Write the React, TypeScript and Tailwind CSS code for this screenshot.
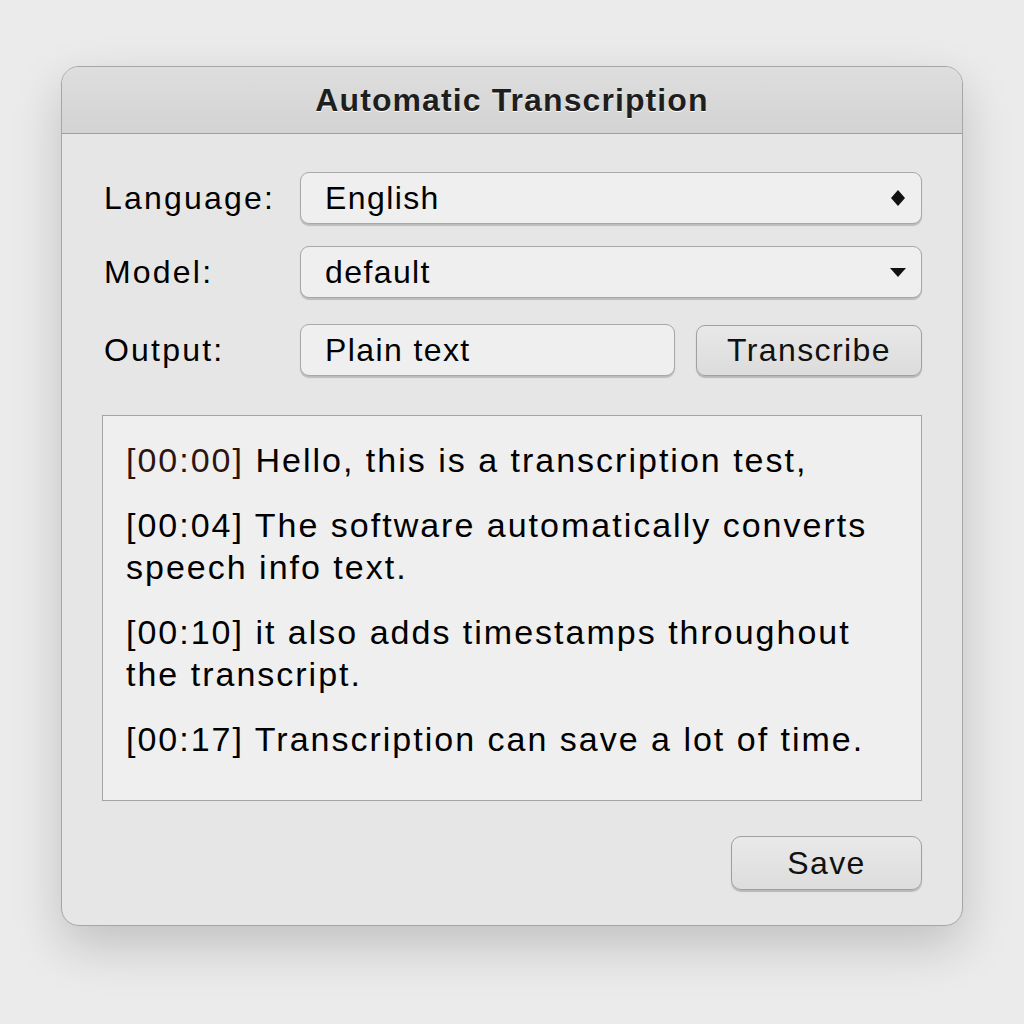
import React from "react";

const font = { fontFamily: '"Liberation Sans", Arial, sans-serif' };

export default function App() {
  return (
    <div
      className="w-[1024px] h-[1024px] bg-[#ebebeb] pt-[66px] pl-[61px]"
      style={font}
    >
      <div className="w-[902px] h-[860px] rounded-[18px] border-[1.5px] border-[#a6a6a6] bg-[#e6e6e6] shadow-[0_20px_50px_rgba(0,0,0,0.18)] flex flex-col overflow-hidden">
        <div className="h-[67px] shrink-0 bg-gradient-to-b from-[#dedede] to-[#d3d3d3] border-b-[1.5px] border-[#9e9e9e] flex items-center justify-center">
          <span className="text-[32px] font-bold tracking-[1.1px] text-[#1e1e1e] [text-shadow:0_1px_0_#ffffff]">
            Automatic Transcription
          </span>
        </div>
        <div className="flex-1 flex flex-col pl-[42px] pr-[40px] pt-[38px]">
          <div className="flex items-center h-[52px]">
            <div className="w-[196px] text-[32px] tracking-[2.2px] text-black">Language:</div>
            <div className="flex-1 h-[52px] rounded-[9px] border border-[#a8a8a8] bg-[#efefef] shadow-[0_1.5px_1px_rgba(0,0,0,0.18)] flex items-center pl-[24px] pr-[16px]">
              <span className="flex-1 text-[32px] tracking-[1.4px] text-black">English</span>
              <svg width="14" height="16" viewBox="0 0 14 16">
                <polygon points="7,0 14,8 7,16 0,8" fill="#111" />
              </svg>
            </div>
          </div>
          <div className="flex items-center h-[52px] mt-[22px]">
            <div className="w-[196px] text-[32px] tracking-[2.2px] text-black">Model:</div>
            <div className="flex-1 h-[52px] rounded-[9px] border border-[#a8a8a8] bg-[#efefef] shadow-[0_1.5px_1px_rgba(0,0,0,0.18)] flex items-center pl-[24px] pr-[15px]">
              <span className="flex-1 text-[32px] tracking-[1.4px] text-black">default</span>
              <svg width="16" height="9" viewBox="0 0 16 9">
                <polygon points="0,0 16,0 8,9" fill="#111" />
              </svg>
            </div>
          </div>
          <div className="flex items-center h-[52px] mt-[26px]">
            <div className="w-[196px] text-[32px] tracking-[2.2px] text-black">Output:</div>
            <div className="w-[375px] h-[52px] rounded-[9px] border border-[#a8a8a8] bg-[#efefef] shadow-[0_1.5px_1px_rgba(0,0,0,0.18)] flex items-center pl-[24px]">
              <span className="text-[32px] tracking-[1.4px] text-black">Plain text</span>
            </div>
            <div className="ml-[21px] flex-1 h-[51px] rounded-[9px] border border-[#a0a0a0] bg-gradient-to-b from-[#e8e8e8] to-[#dcdcdc] shadow-[0_1.5px_1px_rgba(0,0,0,0.2)] flex items-center justify-center">
              <span className="text-[32px] tracking-[1.4px] text-[#111]">Transcribe</span>
            </div>
          </div>
          <div className="-ml-[2px] mt-[39px] h-[386px] border-[1.5px] border-[#a4a4a4] bg-[#efefef] pl-[23px] pt-[23px] text-[34px] tracking-[2px] leading-[42px] text-black">
            <p className="whitespace-nowrap">
              <span className="text-[#2e130f]">[00:00]</span> Hello, this is a transcription test,
            </p>
            <p className="mt-[23px] whitespace-nowrap">
              [00:04] The software automatically converts
              <br />
              speech info text.
            </p>
            <p className="mt-[23px] whitespace-nowrap">
              [00:10] it also adds timestamps throughout
              <br />
              the transcript.
            </p>
            <p className="mt-[23px] whitespace-nowrap">
              [00:17] Transcription can save a lot of time.
            </p>
          </div>
          <div className="mt-[35px] flex justify-end">
            <div className="w-[191px] h-[54px] rounded-[10px] border border-[#a0a0a0] bg-gradient-to-b from-[#e9e9e9] to-[#dddddd] shadow-[0_1.5px_1px_rgba(0,0,0,0.2)] flex items-center justify-center">
              <span className="text-[32px] tracking-[1.4px] text-[#111]">Save</span>
            </div>
          </div>
        </div>
      </div>
    </div>
  );
}
